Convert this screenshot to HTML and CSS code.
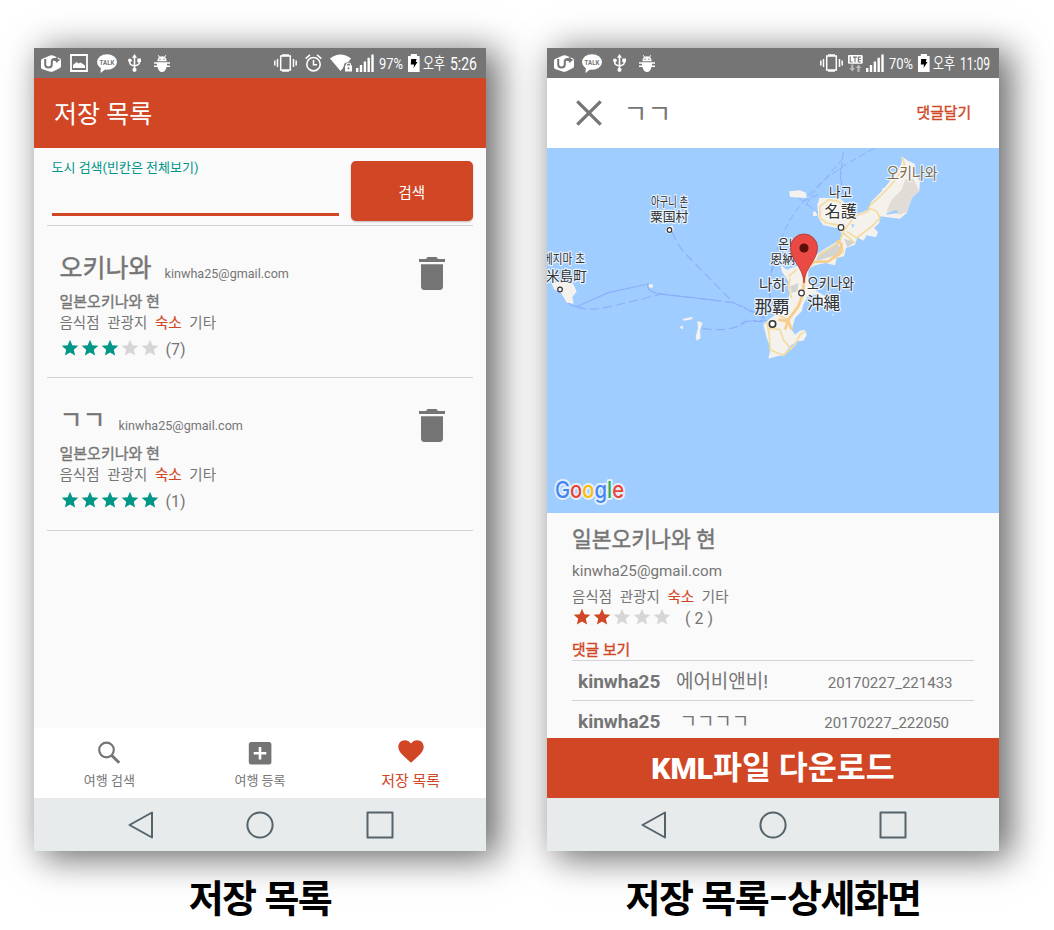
FILE: index.html
```html
<!DOCTYPE html>
<html lang="ko">
<head>
<meta charset="utf-8">
<title>저장 목록</title>
<link rel="stylesheet" href="styles.css">
</head>
<body>
<svg class="defs" width="0" height="0" aria-hidden="true">
  <symbol id="uplus" viewBox="0 0 20 17"><path fill="#fff" d="M1 4 9 .4Q10.500 0 12 .4L19 3.500Q20 4 20 5.500V11Q20 12.500 19 13L12 16.500Q10 17 8.500 16.500L1 14Q0 13.500 0 12V6Q0 4.500 1 4Z"/><path fill="none" stroke="#757575" stroke-width="2" d="M4.200 4V9.500Q4.200 12.500 7.500 12.500T10.800 9.500V6.500Q10.800 4 13.500 4H15.500M15.800 2.200V7.500M12.800 5H18.500"/></symbol>
  <symbol id="picture" viewBox="0 0 18 18"><path fill="none" stroke="#fff" stroke-width="1.800" d="M1 1H17V17H1Z"/><path fill="#fff" d="M3 14V11L6.500 8 8.500 9.500 10.500 8.500 15 11.500V14Z"/></symbol>
  <symbol id="usb" viewBox="0 0 13 18"><path fill="none" stroke="#fff" stroke-width="1.600" d="M6.500 2V16M1.800 6V9Q2 11 6.500 12Q11 11 11.200 9V6"/><path fill="#fff" d="M6.500 0 9 3.800H4Z"/><circle cx="1.900" cy="6.300" r="1.900" fill="#fff"/><path fill="#fff" d="M9.300 4.500H13V8.200H9.300Z"/><circle cx="6.500" cy="15.800" r="2.100" fill="#fff"/></symbol>
  <symbol id="bug" viewBox="0 0 16 17"><path fill="#fff" d="M3.300 6.200Q3.500 3.300 5 2.300L3.700.5 4.400 0 5.900 1.700Q8 .9 10.100 1.700L11.600 0 12.300.5 11 2.300Q12.500 3.300 12.700 6.200Z"/><path fill="#fff" d="M0 7.200H16V8.800H13V10.400H16V12H12.500Q11.500 17 8 17T3.500 12H0V10.400H3V8.800H0Z"/><circle cx="6" cy="4.200" r=".7" fill="#757575"/><circle cx="10" cy="4.200" r=".7" fill="#757575"/></symbol>
  <symbol id="vibrate" viewBox="0 0 23 18"><path fill="none" stroke="#fff" stroke-width="1.500" d="M6.700 2H16.300V16H6.700ZM8 1H15M8 17H15M3.500 5V13M19.500 5V13M.8 6.500V11.500M22.200 6.500V11.500"/></symbol>
  <symbol id="alarm" viewBox="0 0 17 18"><circle cx="8.500" cy="10.200" r="6.700" fill="none" stroke="#fff" stroke-width="1.600"/><path fill="none" stroke="#fff" stroke-width="1.600" d="M8.500 6V10.800H12M.6 4.600 5 .9M16.400 4.600 12 .9"/></symbol>
  <symbol id="wifi" viewBox="0 0 22 18"><path fill="#fff" d="M0 4.500Q10.500-3.500 21 4.500L18 8.300Q14 8.300 14 11.500L13 14 10.500 17Z"/><path fill="#fff" d="M15 11.500H22V17.500H15Z"/><path fill="none" stroke="#fff" stroke-width="1.200" d="M16.500 12V10.500Q16.500 9 18.500 9T20.500 10.500V12"/><circle cx="18.500" cy="14.300" r="1" fill="#757575"/></symbol>
  <symbol id="signal" viewBox="0 0 18 18"><path fill="#fff" d="M0 14H2.400V18H0ZM3.800 11H6.200V18H3.800ZM7.700 7.500H10.100V18H7.700ZM11.500 3.800H13.900V18H11.500ZM15.300.4H17.700V18H15.300Z"/></symbol>
  <symbol id="battery" viewBox="0 0 12 18"><path fill="#fff" d="M0 2H2.800V0H9V2H11.600V18H0Z"/><path fill="#000" d="M3.200 5H8.500L7.800 8H9.500L5.600 14 6 10.500H2.800Z"/></symbol>
  <symbol id="lte" viewBox="0 0 15 17"><rect width="14.700" height="8.800" rx="1" fill="#fff"/><path fill="none" stroke="#757575" stroke-width="1.100" d="M2.200 1.500V7H4.500M5 2.100H9M7 2.100V7.200M12.900 2.100H10.300V7H12.900M10.300 4.500H12.900"/><path fill="#bbb" d="M3.300 9.500H5.300V13H7L4.300 16.500 1.500 13H3.300ZM9.500 17V13H7.700L10.600 9.500 13.300 13H11.600V17Z"/></symbol>
  <symbol id="star" viewBox="0 0 24 24"><path d="M12 17.270 18.180 21l-1.640-7.030L22 9.240l-7.190-.61L12 2 9.190 8.630 2 9.240l5.460 4.730L5.820 21z"/></symbol>
  <symbol id="trash" viewBox="0 0 26 33"><path d="M0 2H7L8.500 0H17.500L19 2H26V5H0ZM2 7.300H24V29.500Q24 33 20.500 33H5.500Q2 33 2 29.500Z"/></symbol>
</svg>

<main class="board">
  <figure class="shot">
    <section class="phone">
      <div class="status">
        <svg class="i-uplus"><use href="#uplus"/></svg>
        <svg class="i-picture"><use href="#picture"/></svg>
        <svg class="i-talk" viewBox="0 0 20 19"><ellipse cx="10" cy="8" rx="10" ry="7.800"/><path d="M4 12 3.500 19 10 14Z"/><text x="2.600" y="10.500" class="tiny" textLength="14.800" lengthAdjust="spacingAndGlyphs">TALK</text></svg>
        <svg class="i-usb"><use href="#usb"/></svg>
        <svg class="i-bug"><use href="#bug"/></svg>
        <span class="spacer"></span>
        <svg class="i-vibrate"><use href="#vibrate"/></svg>
        <svg class="i-alarm"><use href="#alarm"/></svg>
        <svg class="i-wifi"><use href="#wifi"/></svg>
        <svg class="i-signal"><use href="#signal"/></svg>
        <svg class="pct"><text x="0" y="15.500" textLength="24" lengthAdjust="spacingAndGlyphs">97%</text></svg>
        <svg class="i-battery"><use href="#battery"/></svg>
        <svg class="clock short"><text x="0" y="15.500" textLength="22" lengthAdjust="spacingAndGlyphs">오후</text><text class="time" x="27" y="16.500" textLength="27" lengthAdjust="spacingAndGlyphs">5:26</text></svg>
      </div>
      <header class="bar">저장 목록</header>
      <div class="list">
        <form class="search">
          <label class="field">도시 검색(빈칸은 전체보기)</label>
          <button class="go" type="button">검색</button>
        </form>
        <article class="item">
          <div class="info">
            <div class="head"><h2>오키나와</h2><span class="mail">kinwha25@gmail.com</span></div>
            <div class="place">일본오키나와 현</div>
            <div class="tags"><span>음식점</span><span>관광지</span><span class="on">숙소</span><span>기타</span></div>
            <div class="rating teal"><svg><use href="#star"/></svg><svg><use href="#star"/></svg><svg><use href="#star"/></svg><svg class="off"><use href="#star"/></svg><svg class="off"><use href="#star"/></svg><span>(7)</span></div>
          </div>
          <svg class="trash"><use href="#trash"/></svg>
        </article>
        <article class="item">
          <div class="info">
            <div class="head"><h2>ㄱㄱ</h2><span class="mail">kinwha25@gmail.com</span></div>
            <div class="place">일본오키나와 현</div>
            <div class="tags"><span>음식점</span><span>관광지</span><span class="on">숙소</span><span>기타</span></div>
            <div class="rating teal"><svg><use href="#star"/></svg><svg><use href="#star"/></svg><svg><use href="#star"/></svg><svg><use href="#star"/></svg><svg><use href="#star"/></svg><span>(1)</span></div>
          </div>
          <svg class="trash"><use href="#trash"/></svg>
        </article>
      </div>
      <nav class="tabs">
        <div class="tab"><svg viewBox="0 0 30 30"><circle cx="12.500" cy="12" r="7.300" fill="none" stroke="#757575" stroke-width="2.200"/><path fill="none" stroke="#757575" stroke-width="3" d="M17.500 17.200 25.200 24.800"/></svg><span>여행 검색</span></div>
        <div class="tab"><svg viewBox="0 0 30 30"><rect x="3.800" y="4" width="22.600" height="22.600" rx="2.500" fill="#757575"/><path stroke="#fff" stroke-width="2.600" d="M15 9V21.600M8.700 15.300H21.300"/></svg><span>여행 등록</span></div>
        <div class="tab active"><svg viewBox="0 0 30 30"><path fill="#d14625" d="M15 24.700 12.500 22.400C5.500 16.300 2.300 13 2.300 8.700 2.300 5 5.100 2.200 8.900 2.200 11.200 2.200 13.500 3.400 15 5.500 16.500 3.400 18.800 2.200 21.100 2.200 24.900 2.200 27.700 5 27.700 8.700 27.700 13 24.500 16.300 17.500 22.400Z"/></svg><span>저장 목록</span></div>
      </nav>
      <div class="keys"><svg viewBox="0 0 266 28"><path d="M1.500 14 24 1.500V26.500ZM239.500 1.500H264.500V26.500H239.500Z"/><circle cx="132" cy="14" r="12.600"/></svg></div>
    </section>
    <figcaption>저장 목록</figcaption>
  </figure>

  <figure class="shot">
    <section class="phone">
      <div class="status">
        <svg class="i-uplus"><use href="#uplus"/></svg>
        <svg class="i-talk close" viewBox="0 0 20 19"><ellipse cx="10" cy="8" rx="10" ry="7.800"/><path d="M4 12 3.500 19 10 14Z"/><text x="2.600" y="10.500" class="tiny" textLength="14.800" lengthAdjust="spacingAndGlyphs">TALK</text></svg>
        <svg class="i-usb"><use href="#usb"/></svg>
        <svg class="i-bug"><use href="#bug"/></svg>
        <span class="spacer"></span>
        <svg class="i-vibrate"><use href="#vibrate"/></svg>
        <svg class="i-lte"><use href="#lte"/></svg>
        <svg class="i-signal near"><use href="#signal"/></svg>
        <svg class="pct"><text x="0" y="15.500" textLength="24" lengthAdjust="spacingAndGlyphs">70%</text></svg>
        <svg class="i-battery"><use href="#battery"/></svg>
        <svg class="clock long"><text x="0" y="15.500" textLength="22" lengthAdjust="spacingAndGlyphs">오후</text><text class="time" x="27" y="16.500" textLength="30" lengthAdjust="spacingAndGlyphs">11:09</text></svg>
      </div>
      <header class="detail-bar">
        <svg class="x" viewBox="0 0 26 26"><path stroke="#757575" stroke-width="3.300" d="M1.300 1.300 24.700 24.700M24.700 1.300 1.300 24.700"/></svg>
        <h1>ㄱㄱ</h1>
        <span class="write">댓글달기</span>
      </header>
      <svg class="map" viewBox="547 148 452 365">
        <g transform="translate(540 150) scale(.33333)">
          <g fill="none" stroke="#8ab0fa" stroke-width="3.500">
            <path d="M64 428Q75 465 110 470L205 428 325 402Q315 420 355 432L545 453"/>
            <path stroke-dasharray="28 12" d="M110 470Q150 485 210 470L355 435M355 430 580 458M397 245Q410 285 440 315L580 458 685 512M487 535Q550 545 590 530L615 514H680M690 490V390L700 330"/>
          </g>
          <path fill="#f5f2ee" d="M35 400 60 394 100 402 110 425 97 440 101 461 80 458 62 428 42 418ZM380 232 397 226 402 240 388 252 376 245ZM328 402 340 404 336 415 326 410ZM472 513 488 518 480 540 482 565 470 572 467 560 474 535ZM428 507 458 500 456 508 432 512ZM418 533 428 526 429 538Z"/>
        </g>
        <g transform="translate(740 148) scale(.33333)">
          <g fill="none" stroke="#8ab0fa" stroke-width="3" stroke-dasharray="22 10">
            <path d="M405 0Q250 80 190 160 130 230 105 330L90 400V500M310 10 300 100M310 30 215 140 195 180M235 140 190 160M300 60 310 150M150 130 235 195"/>
            <path d="M0 472 90 515M0 535Q20 512 90 518"/>
          </g>
          <path fill="#f5f2ee" d="M485 25 500 36 525 48 522 70 540 100 538 128 515 150 500 195 480 212 420 205 418 225 402 240 414 252 408 268 380 262 370 278 352 268 345 290 318 300 312 325 290 330 285 352 255 345 225 352 205 362 205 400 230 430 265 450 255 465 235 440 205 440 190 470 185 490 165 510 155 545 165 560 180 548 195 545 200 562 190 578 172 580 150 595 130 622 110 625 85 632 92 600 80 570 70 530 85 515 100 505 120 490 135 480 145 455 150 430 145 400 125 370 122 350 140 365 180 350 220 325 250 305 300 275 305 255 290 240 250 232 235 210 232 170 238 150 300 150 330 180 345 200 385 185 395 160 425 130 445 105 470 75 485 45ZM148 130 180 127 198 134 200 150 150 147ZM275 497 282 500 277 503Z"/>
          <path fill="#e1dcd6" d="M485 125 495 95 520 92 538 130 515 148 500 192 480 200 440 190 455 155Z"/>
          <path fill="#d3d3d1" d="M235 318 290 285 302 300 298 318 260 330 228 340ZM150 415 175 405 172 430 155 435ZM312 272 345 282 322 298Z"/>
          <path fill="#a0cdff" d="M440 195 470 186 475 194 440 200ZM334 228 344 230 338 240Z"/>
          <g fill="none" stroke="#f3dc9f" stroke-width="5" stroke-linejoin="round">
            <path d="M487 28 494 50 470 90 445 120 415 150 390 172 385 190 345 205 310 250 300 280M385 180 410 190 420 210 395 235 350 270 320 250M300 232 260 225 240 210V175L265 155 295 160 325 185 345 210M310 255 345 285M235 325 300 280 310 310 285 332M150 390 145 420 155 450M170 365 145 385M80 520 88 560 90 605 130 622 165 590 180 560 195 550M80 540 120 545 130 575 155 605M105 495 150 520"/>
          </g>
          <path fill="none" stroke="#f8cd8c" stroke-width="8" stroke-linejoin="round" d="M290 278 305 290 300 315 265 340 220 342 195 370 188 440 175 475 145 515 135 545M115 515 145 520 155 545"/>
          <path fill="#f5f2ee" d="M425 122 435 120 430 130ZM218 193 228 190 232 203 220 205Z"/>
        </g>
        <g fill="#fff" stroke="#333" stroke-width="1.200"><circle cx="669.500" cy="230" r="2.300"/><circle cx="560" cy="289.500" r="2.300"/><circle cx="841" cy="227.500" r="2.800"/><circle cx="801.500" cy="293" r="2.800"/><circle cx="772.500" cy="324" r="3.200" stroke-width="1.600"/></g>
        <g class="ko">
          <text x="651" y="205.500" font-size="13" textLength="37" lengthAdjust="spacingAndGlyphs">아구니 촌</text>
          <text x="543" y="263" font-size="13" textLength="42" lengthAdjust="spacingAndGlyphs">메지마 초</text>
          <text x="829" y="196.500" font-size="14" textLength="23" lengthAdjust="spacingAndGlyphs">나고</text>
          <text class="region" x="886.500" y="179" font-size="16" textLength="51" lengthAdjust="spacingAndGlyphs">오키나와</text>
          <text x="778" y="248" font-size="13" textLength="22" lengthAdjust="spacingAndGlyphs">온나</text>
          <text x="759" y="289.500" font-size="15" textLength="27" lengthAdjust="spacingAndGlyphs">나하</text>
          <text x="807" y="288.500" font-size="15" textLength="47" lengthAdjust="spacingAndGlyphs">오키나와</text>
        </g>
        <g class="ja">
          <text x="650" y="221" font-size="12.800">粟国村</text>
          <text x="546" y="280.500" font-size="13.600">米島町</text>
          <text x="824.500" y="217" font-size="16.200">名護</text>
          <text x="770" y="263.500" font-size="12.500">恩納</text>
          <text x="754.500" y="313" font-size="17.600">那覇</text>
          <text x="807" y="309" font-size="16.500">沖縄</text>
        </g>
        <path fill="#ea4a43" stroke="#a8352f" stroke-width=".8" d="M804 283C803 266 790.500 261 790.500 247.500A13.500 13.500 0 0 1 817.500 247.500C817.500 261 805 266 804 283Z"/>
        <circle cx="804" cy="248" r="4.600" fill="#5b0f0b"/>
        <text class="google" x="555" y="498" textLength="69" lengthAdjust="spacingAndGlyphs"><tspan fill="#4285f4">G</tspan><tspan fill="#ea4335">o</tspan><tspan fill="#fbbc05">o</tspan><tspan fill="#4285f4">g</tspan><tspan fill="#34a853">l</tspan><tspan fill="#ea4335">e</tspan></text>
      </svg>
      <div class="detail">
        <h2>일본오키나와 현</h2>
        <div class="mail">kinwha25@gmail.com</div>
        <div class="tags"><span>음식점</span><span>관광지</span><span class="on">숙소</span><span>기타</span></div>
        <div class="rating red"><svg><use href="#star"/></svg><svg><use href="#star"/></svg><svg class="off"><use href="#star"/></svg><svg class="off"><use href="#star"/></svg><svg class="off"><use href="#star"/></svg><span>( 2 )</span></div>
        <h3>댓글 보기</h3>
        <div class="comment"><b>kinwha25</b><span class="say">에어비앤비!</span><time>20170227_221433</time></div>
        <div class="comment second"><b>kinwha25</b><span class="say">ㄱㄱㄱㄱ</span><time>20170227_222050</time></div>
      </div>
      <button class="download" type="button"><span class="kml">KML</span>파일 다운로드</button>
      <div class="keys"><svg viewBox="0 0 266 28"><path d="M1.500 14 24 1.500V26.500ZM239.500 1.500H264.500V26.500H239.500Z"/><circle cx="132" cy="14" r="12.600"/></svg></div>
    </section>
    <figcaption>저장 목록<span class="dash">-</span>상세화면</figcaption>
  </figure>
</main>
</body>
</html>
```

FILE: styles.css
```css
* { box-sizing: border-box; }
body {
  margin: 0;
  background: #fff;
  font-family: Roboto, "Noto Sans CJK KR", sans-serif;
  color: #757575;
}
.defs { position: absolute; }
svg { display: block; flex: none; }
h1, h2, h3, figure { margin: 0; font-weight: 400; }
button { border: 0; padding: 0; font-family: inherit; }

.board { display: flex; gap: 61px; padding: 48px 0 0 34px; height: 930px; overflow: hidden; }
.shot { width: 452px; flex: none; }
.phone {
  display: flex;
  flex-direction: column;
  height: 803px;
  background: #fafafa;
  box-shadow: 10px 5px 34px 2px rgba(0, 0, 0, .6);
}
figcaption {
  margin: 15px -20px 0;
  text-align: center;
  white-space: nowrap;
  font: 700 38px/60px "Noto Sans CJK KR", sans-serif;
  letter-spacing: -1.6px;
  color: #000;
}
.dash { display: inline-block; margin: 0 3.500px 0 3px; transform: scaleX(1.4); }

.status { display: flex; align-items: center; height: 30px; padding: 0 8px 0 7px; background: #757575; }
.status svg { overflow: visible; }
.spacer { flex: 1; }
.status text { font: 400 15.500px Roboto, "Noto Sans CJK KR", sans-serif; fill: #fff; }
.status .time { font-size: 18px; }
.status .tiny { font: 700 6.500px Roboto, sans-serif; fill: #757575; }
.i-uplus { width: 20px; height: 17px; }
.i-picture { width: 18px; height: 18px; margin-left: 9px; }
.i-talk { width: 20px; height: 19px; margin-left: 9px; fill: #fff; }
.i-talk.close { margin-left: 8px; }
.i-usb { width: 13px; height: 18px; margin-left: 11px; }
.i-bug { width: 16px; height: 17px; margin-left: 13px; }
.i-vibrate { width: 23px; height: 18px; }
.i-alarm { width: 17px; height: 18px; margin-left: 8px; }
.i-wifi { width: 22px; height: 18px; margin-left: 8px; }
.i-lte { width: 15px; height: 17px; margin-left: 5px; }
.i-signal { width: 18px; height: 18px; margin-left: 4px; }
.i-signal.near { margin-left: 3px; }
.pct { width: 24px; height: 20px; margin-left: 5px; }
.i-battery { width: 12px; height: 18px; margin-left: 5px; }
.clock { height: 20px; margin-left: 3px; }
.clock.short { width: 55px; }
.clock.long { width: 58px; }

.bar { height: 70px; padding-left: 20px; background: #d14625; color: #fff; font-size: 25px; line-height: 73px; }
.list { flex: 1; padding: 0 13px; }
.search { display: flex; justify-content: space-between; height: 78px; padding: 13px 0 4px 4.500px; border-bottom: 1px solid #d3d3d3; }
.field { width: 287.500px; height: 55px; border-bottom: 3px solid #d14625; color: #009688; font-size: 13px; line-height: 14px; }
.go { width: 122.500px; height: 60px; border-radius: 5px; background: #d14625; color: #fff; font-size: 14.500px; box-shadow: 0 1px 2px rgba(0, 0, 0, .25); }

.item { display: flex; justify-content: space-between; height: 152.400px; padding: 25px 28px 0 12.500px; border-bottom: 1px solid #d3d3d3; }
.head { display: flex; align-items: baseline; height: 42px; line-height: 36px; }
.head h2, .detail h2 { font-size: 25px; line-height: 36px; -webkit-text-stroke: .45px currentColor; }
.mail { position: relative; top: .7px; font-size: 12.600px; margin-left: 13px; }
.place { font-size: 15px; line-height: 18px; -webkit-text-stroke: .35px currentColor; }
.tags { display: flex; gap: 7.700px; font-size: 14.500px; line-height: 25px; }
.on { color: #d14625; -webkit-text-stroke: .2px currentColor; }
.rating { display: flex; align-items: center; height: 26px; font-size: 16px; }
.rating svg { width: 20px; height: 20px; position: relative; top: -1px; }
.rating span { margin-left: 6px; }
.teal { fill: #009688; }
.red { fill: #d14625; }
.off { fill: #d6d6d6; }
.trash { width: 26px; height: 33px; margin-top: 6px; fill: #757575; }

.tabs { display: flex; height: 70px; background: #fff; }
.tab { flex: 1; display: flex; flex-direction: column; align-items: center; padding-top: 10px; font-size: 13px; line-height: 26px; }
.tab svg { width: 30px; height: 30px; }
.tab.active { color: #d14625; font-size: 15px; }
.keys { height: 53px; padding: 12.500px 0 0 93.500px; background: #e7ebec; }
.keys svg { width: 266px; height: 28px; }
.keys path, .keys circle { fill: none; stroke: #55636b; stroke-width: 2; stroke-linejoin: round; }

.detail-bar { display: flex; align-items: center; height: 70px; padding: 0 28px 0 29px; background: #fff; }
.x { width: 26px; height: 26px; }
.detail-bar h1 { margin-left: 21.500px; padding-top: 2px; font-size: 26px; font-weight: 400; line-height: 36px; }
.write { margin-left: auto; font-size: 14.800px; line-height: 20px; color: #d14625; -webkit-text-stroke: .4px currentColor; }
.map { width: 452px; height: 365px; background: #a0cdff; }
.map .ko { font-family: "Noto Sans CJK KR", sans-serif; font-weight: 400; }
.map .ja { font-family: "Noto Sans CJK JP", sans-serif; font-weight: 400; }
.map .ko text, .map .ja text { paint-order: stroke; stroke: #fff; stroke-opacity: .75; stroke-width: 2.500px; stroke-linejoin: round; }
.map .ko, .map .ja { fill: #333; }
.map .region { fill: #7b6c50; }
.google { font: 500 22.500px Inter, sans-serif; paint-order: stroke; stroke: #e3effc; stroke-width: 4px; stroke-linejoin: round; }

.detail { flex: 1; min-height: 0; overflow: hidden; padding: 11px 25.500px 0 25px; }
.detail h2 { font-size: 21.500px; line-height: 32px; }
.detail .mail { top: 0; margin: 0; font-size: 15.200px; line-height: 31px; }
.detail .tags { line-height: 22px; }
.detail .rating { height: 18px; }
.detail .rating span { margin-left: 13px; }
.detail h3 { height: 34px; border-bottom: 1px solid #d3d3d3; color: #d14625; font-size: 14.800px; line-height: 46px; -webkit-text-stroke: .4px currentColor; }
.comment { display: flex; align-items: baseline; height: 40px; padding: 0 21px 0 6px; border-bottom: 1px solid #d3d3d3; line-height: 42px; white-space: nowrap; }
.comment.second { padding-right: 24.500px; border: 0; }
.comment b { font-size: 19px; font-weight: 700; }
.say { margin-left: 15.500px; font-size: 19px; }
.second .say { margin-left: 19px; }
.comment time { margin-left: auto; font-size: 15px; }
.download { flex: none; height: 60px; padding-top: 2px; background: #d14625; color: #fff; font-size: 31.500px; font-weight: 700; line-height: 58px; }
.kml { font-size: 30px; font-weight: 900; }
```
